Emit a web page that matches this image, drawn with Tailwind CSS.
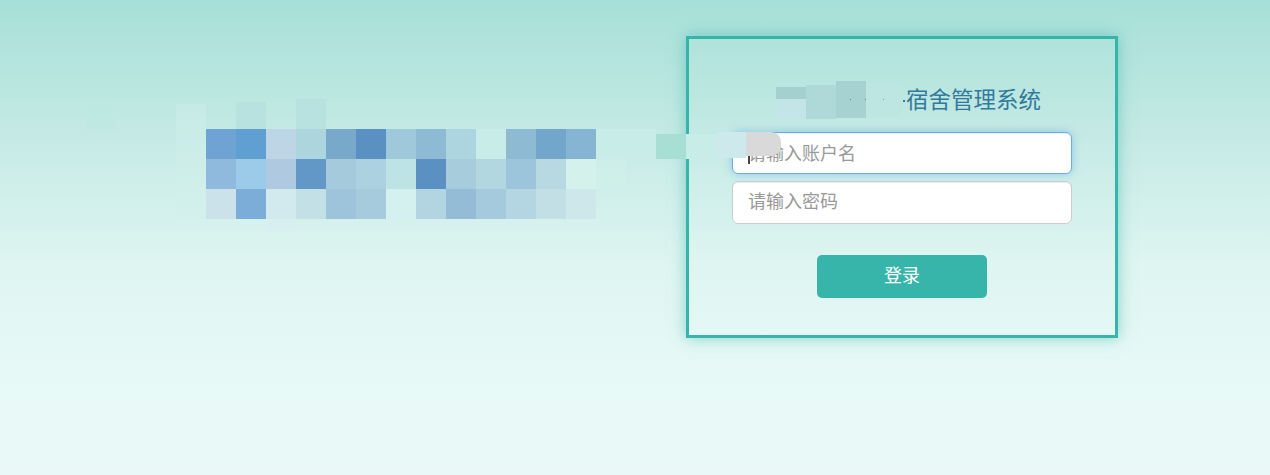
<!DOCTYPE html>
<html lang="zh-CN">
<head>
  <meta charset="UTF-8">
  <meta name="viewport" content="width=device-width, initial-scale=1.0">
  <title>宿舍管理系统</title>
  <script src="https://cdn.jsdelivr.net/npm/@tailwindcss/browser@4"></script>
</head>
<body class="relative h-screen overflow-hidden bg-[linear-gradient(to_bottom,#a6e0d8_0%,#c3e9e4_27%,#def5f1_55%,#e7f9f6_80%,#eaf9f7_100%)] font-['Noto_Sans_CJK_SC','Noto_Sans',sans-serif]">
  <div class="flex items-start pt-9">
    <!-- Blurred logo -->
    <div class="ml-[206px] mt-[93px] w-[480px] shrink-0">
      <div class="grid grid-cols-[repeat(13,30px)] auto-rows-[30px]">
        <div class="bg-[#6fa3d3]"></div><div class="bg-[#609fd2]"></div><div class="bg-[#bdd5e5]"></div><div class="bg-[#add5dd]"></div><div class="bg-[#78a9cb]"></div><div class="bg-[#5b90c3]"></div><div class="bg-[#9fc9da]"></div><div class="bg-[#8ebad4]"></div><div class="bg-[#add5e0]"></div><div class="bg-[#c8ede9]"></div><div class="bg-[#8fbad4]"></div><div class="bg-[#72a6cb]"></div><div class="bg-[#86b5d4]"></div>
        <div class="bg-[#8fb9dd]"></div><div class="bg-[#9ccbe9]"></div><div class="bg-[#afc9e1]"></div><div class="bg-[#6298c7]"></div><div class="bg-[#a4cadc]"></div><div class="bg-[#acd1e0]"></div><div class="bg-[#bde3e5]"></div><div class="bg-[#5b90c3]"></div><div class="bg-[#a7cddd]"></div><div class="bg-[#b3d7e1]"></div><div class="bg-[#9cc4da]"></div><div class="bg-[#b8d9e2]"></div><div class="bg-[#d5f1ec]"></div>
        <div class="bg-[#cbe2eb]"></div><div class="bg-[#7cadd9]"></div><div class="bg-[#d2eaee]"></div><div class="bg-[#c2e0e5]"></div><div class="bg-[#9dc4da]"></div><div class="bg-[#a5cbdc]"></div><div class="bg-[#d4f0ef]"></div><div class="bg-[#b2d5e1]"></div><div class="bg-[#95bcd6]"></div><div class="bg-[#a5cadd]"></div><div class="bg-[#b4d5e2]"></div><div class="bg-[#c2dfe6]"></div><div class="bg-[#cee7ea]"></div>
      </div>
    </div>

    <!-- Login box -->
    <div class="w-[432px] h-[302px] shrink-0 border-[3px] border-[#37b5aa] shadow-[0_0_14px_rgba(55,181,170,0.55)] flex flex-col items-center">
      <h1 class="mt-[39px] mb-[5px] w-[340px] h-[40px] pl-[174px] text-[22.5px] leading-[40px] font-normal text-[#33799a] whitespace-nowrap">宿舍管理系统</h1>
      <div class="relative mt-[9px] w-[340px]">
        <input type="text" placeholder="请输入账户名" class="block w-full h-[42px] pl-[15px] pr-4 pb-[2px] text-[18px] bg-white rounded-md border border-[#66afe9] outline-none placeholder:text-[#999] shadow-[inset_0_1px_1px_rgba(0,0,0,0.075),0_0_8px_rgba(102,175,233,0.6)]">
        <span class="absolute left-[16px] top-[15px] h-[17px] w-[2px] bg-[#444]"></span>
      </div>
      <input type="password" placeholder="请输入密码" class="block mt-[7px] w-[340px] h-[43px] pl-[15px] pr-4 pb-[6px] text-[18px] bg-white rounded-md border border-[#ccc] outline-none placeholder:text-[#999] shadow-[inset_0_1px_1px_rgba(0,0,0,0.075)]">
      <button class="mt-[31px] w-[170px] h-[43px] pb-1 rounded-[5px] bg-[#37b5aa] text-white text-[18px]">登录</button>
    </div>
  </div>

  <!-- Redaction smudges over the logo and the title -->
  <div class="absolute left-[176px] top-[104px] w-[30px] h-[115px] bg-[#d2f0ea]/40"></div>
  <div class="absolute left-[236px] top-[102px] w-[30px] h-[27px] bg-[#b8e2e0]"></div>
  <div class="absolute left-[296px] top-[99px] w-[30px] h-[30px] bg-[#b8e2e0]"></div>
  <div class="absolute left-[266px] top-[219px] w-[30px] h-[12px] bg-[#d8eff1]"></div>
  <div class="absolute left-[86px] top-[107px] w-[30px] h-[22px] bg-[#bce8e1]/50"></div>
  <div class="absolute left-[596px] top-[129px] w-[60px] h-[30px] bg-[#c8ece8]"></div>
  <div class="absolute left-[596px] top-[159px] w-[30px] h-[30px] bg-[#d0f0ea]/60"></div>
  <div class="absolute left-[656px] top-[134px] w-[30px] h-[25px] bg-[#a8dfd4]"></div>
  <div class="absolute left-[686px] top-[134px] w-[30px] h-[25px] bg-[#c8ece8]"></div>
  <div class="absolute left-[716px] top-[132px] w-[30px] h-[26px] bg-[#cde9ec]"></div>
  <div class="absolute left-[746px] top-[132px] w-[35px] h-[24px] rounded-r-[10px] bg-[#d9d9d9]"></div>
  <div class="absolute left-[776px] top-[87px] w-[30px] h-[12px] bg-[#a5d0d0]"></div>
  <div class="absolute left-[776px] top-[99px] w-[30px] h-[20px] bg-[#c3e5e8]"></div>
  <div class="absolute left-[806px] top-[85px] w-[30px] h-[34px] bg-[#aed9d8]"></div>
  <div class="absolute left-[836px] top-[81px] w-[30px] h-[37px] bg-[#a6d2d2]"></div>
  <div class="absolute left-[866px] top-[83px] w-[36px] h-[34px] rounded-r-[10px] bg-[#bde5e1]"></div>
  <div class="absolute left-[850px] top-[99px] size-px bg-[#4f8a9a]"></div>
  <div class="absolute left-[865px] top-[99px] size-px bg-[#4f8a9a]"></div>
  <div class="absolute left-[883px] top-[99px] size-px bg-[#6fa5ad]"></div>
  <div class="absolute left-[903px] top-[100px] size-[2px] bg-[#33799a]"></div>
</body>
</html>
